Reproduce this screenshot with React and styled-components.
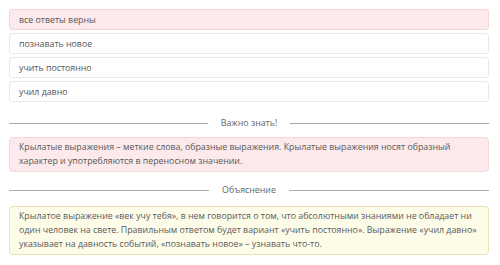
import React from 'react';
import styled, { createGlobalStyle } from 'styled-components';

const GlobalStyle = createGlobalStyle`
  body {
    margin: 0;
    background: #ffffff;
    font-family: "Open Sans", "Liberation Sans", sans-serif;
  }
`;

const Page = styled.div`
  width: 500px;
  height: 265px;
  box-sizing: border-box;
  padding: 9px 11px 0 9px;
  display: flex;
  flex-direction: column;
`;

const Answers = styled.div`
  display: flex;
  flex-direction: column;
  gap: 3px;
`;

const Answer = styled.div`
  height: 21px;
  box-sizing: border-box;
  display: flex;
  align-items: center;
  padding-left: 9px;
  font-size: 8.8px;
  color: #555555;
  border-radius: 3px;
  border: 1px solid ${p => (p.wrong ? '#f4d6d9' : '#e9e9e9')};
  background: ${p => (p.wrong ? '#fbe9eb' : '#ffffff')};
`;

const Divider = styled.div`
  display: flex;
  align-items: center;
  gap: 13px;
  margin-top: ${p => p.top}px;
  font-size: 8.8px;
  color: #666666;

  &::before,
  &::after {
    content: '';
    flex: 1;
    height: 1px;
    background: #a9a9a9;
  }
`;

const Note = styled.div`
  margin-top: ${p => p.top}px;
  box-sizing: border-box;
  padding: 2px 9px 3px 9px;
  border-radius: 4px;
  font-size: 8.8px;
  line-height: 14px;
  white-space: nowrap;
  color: #5a5a5a;
  border: 1px solid ${p => (p.kind === 'info' ? '#f4d6d9' : '#e9e2b3')};
  background: ${p => (p.kind === 'info' ? '#fbe9eb' : '#fdfce9')};
`;

export default function App() {
  return (
    <>
      <GlobalStyle />
      <Page>
        <Answers>
          <Answer wrong>все ответы верны</Answer>
          <Answer>познавать новое</Answer>
          <Answer>учить постоянно</Answer>
          <Answer>учил давно</Answer>
        </Answers>
        <Divider top={15}>Важно знать!</Divider>
        <Note kind="info" top={8}>
          Крылатые выражения – меткие слова, образные выражения. Крылатые выражения носят образный
          <br />
          характер и употребляются в переносном значении.
        </Note>
        <Divider top={12}>Объяснение</Divider>
        <Note kind="hint" top={10}>
          Крылатое выражение «век учу тебя», в нем говорится о том, что абсолютными знаниями не обладает ни
          <br />
          один человек на свете. Правильным ответом будет вариант «учить постоянно». Выражение «учил давно»
          <br />
          указывает на давность событий, «познавать новое» – узнавать что-то.
        </Note>
      </Page>
    </>
  );
}
